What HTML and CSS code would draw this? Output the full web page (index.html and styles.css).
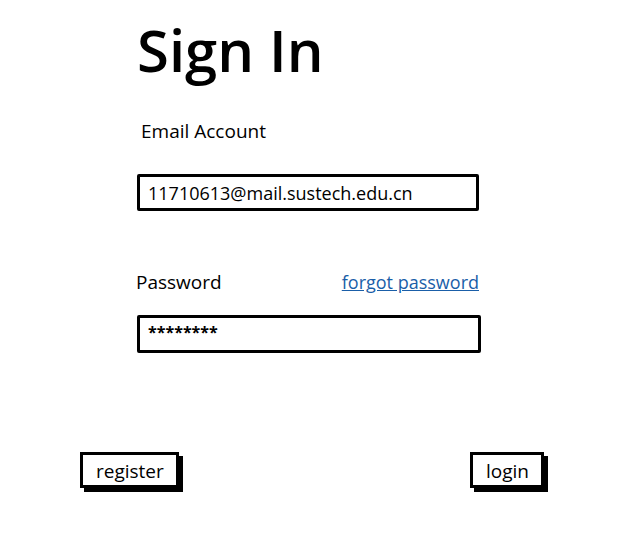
FILE: index.html
```html
<!DOCTYPE html>
<html>
<head>
<meta charset="utf-8">
<link rel="stylesheet" href="styles.css">
</head>
<body>
<div class="page">
  <div class="form">
    <h1 class="title">Sign In</h1>
    <div class="label email-label">Email Account</div>
    <div class="input email-input">11710613@mail.sustech.edu.cn</div>
    <div class="pw-row">
      <span class="label">Password</span>
      <a class="forgot" href="#">forgot password</a>
    </div>
    <div class="input pw-input">********</div>
  </div>
  <div class="actions">
    <button class="btn btn-register">register</button>
    <button class="btn btn-login">login</button>
  </div>
</div>
</body>
</html>
```
FILE: styles.css
```css
* { box-sizing: border-box; }
html, body { margin: 0; padding: 0; background: #fff; }
body { font-family: "Open Sans", "Liberation Sans", sans-serif; color: #000; }
.page { width: 639px; height: 545px; overflow: hidden; }
.form { margin-left: 137px; width: 342px; display: flex; flex-direction: column; }
.title { margin: 12px 0 0 0; font-family: "Open Sans", sans-serif; font-weight: 600; font-size: 58px; line-height: 76px; letter-spacing: 0; }
.label { font-size: 19px; line-height: 24px; }
.email-label { margin: 31px 0 0 4px; }
.input { border: 3px solid #000; border-radius: 2px; font-size: 18px; line-height: 26px; padding: 3px 8px 2px; }
.email-input { margin-top: 31px; width: 342px; height: 37px; }
.pw-row { display: flex; justify-content: space-between; align-items: baseline; margin-top: 59px; margin-left: -1px; }
.forgot { color: #1a5ea8; font-size: 18px; line-height: 24px; text-decoration: underline; }
.pw-input { margin-top: 21px; width: 344px; height: 38px; font-size: 16px; font-weight: 700; padding-top: 1px; letter-spacing: 0; }
.actions { display: flex; justify-content: space-between; margin: 99px 95px 0 80px; }
.btn { font-family: inherit; font-size: 19px; line-height: 26px; background: #fff; color: #000; border: 3px solid #000; box-shadow: 4px 4px 0 #000; padding: 3px 13px 4px; height: 36px; }
.btn-register { width: 99px; }
.btn-login { width: 74px; }
```
